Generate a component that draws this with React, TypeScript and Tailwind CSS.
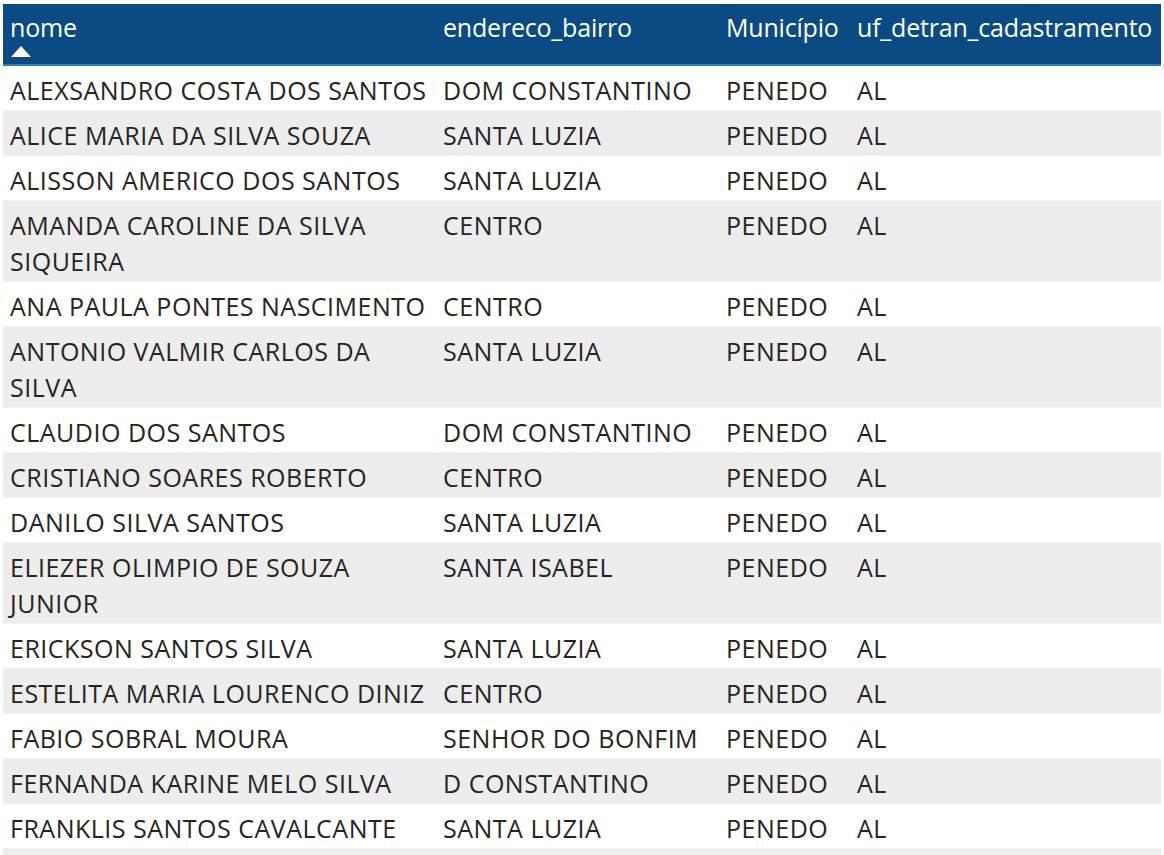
const rows: [string[], string, string, string][] = [
  [['ALEXSANDRO COSTA DOS SANTOS'], 'DOM CONSTANTINO', 'PENEDO', 'AL'],
  [['ALICE MARIA DA SILVA SOUZA'], 'SANTA LUZIA', 'PENEDO', 'AL'],
  [['ALISSON AMERICO DOS SANTOS'], 'SANTA LUZIA', 'PENEDO', 'AL'],
  [['AMANDA CAROLINE DA SILVA', 'SIQUEIRA'], 'CENTRO', 'PENEDO', 'AL'],
  [['ANA PAULA PONTES NASCIMENTO'], 'CENTRO', 'PENEDO', 'AL'],
  [['ANTONIO VALMIR CARLOS DA', 'SILVA'], 'SANTA LUZIA', 'PENEDO', 'AL'],
  [['CLAUDIO DOS SANTOS'], 'DOM CONSTANTINO', 'PENEDO', 'AL'],
  [['CRISTIANO SOARES ROBERTO'], 'CENTRO', 'PENEDO', 'AL'],
  [['DANILO SILVA SANTOS'], 'SANTA LUZIA', 'PENEDO', 'AL'],
  [['ELIEZER OLIMPIO DE SOUZA', 'JUNIOR'], 'SANTA ISABEL', 'PENEDO', 'AL'],
  [['ERICKSON SANTOS SILVA'], 'SANTA LUZIA', 'PENEDO', 'AL'],
  [['ESTELITA MARIA LOURENCO DINIZ'], 'CENTRO', 'PENEDO', 'AL'],
  [['FABIO SOBRAL MOURA'], 'SENHOR DO BONFIM', 'PENEDO', 'AL'],
  [['FERNANDA KARINE MELO SILVA'], 'D CONSTANTINO', 'PENEDO', 'AL'],
  [['FRANKLIS SANTOS CAVALCANTE'], 'SANTA LUZIA', 'PENEDO', 'AL'],
];

export default function App() {
  return (
    <div
      className="h-[855px] overflow-hidden bg-white pt-1 pl-[3px] pr-[3px]"
      style={{ fontFamily: '"Open Sans", "Noto Sans", sans-serif' }}>
      <div className="grid grid-cols-[433px_283px_131px_1fr] bg-[#0b4a82] border-b-2 border-[#2b7cc4] h-[62px] text-white text-[25px] tracking-[-0.2px]">
        <div className="pl-[7px] pt-[5px] leading-[36px] relative">
          nome
          <svg className="absolute left-[8px] top-[42px]" width="20" height="11" viewBox="0 0 20 11">
            <polygon points="10,0 20,11 0,11" fill="white" />
          </svg>
        </div>
        <div className="pl-[7px] pt-[5px] leading-[36px]">endereco_bairro</div>
        <div className="pl-[7px] pt-[5px] leading-[36px]">Município</div>
        <div className="pl-[7px] pt-[5px] leading-[36px] whitespace-nowrap">uf_detran_cadastramento</div>
      </div>
      {rows.map(([name, bairro, mun, uf], i) => (
        <div
          key={i}
          className={`grid grid-cols-[433px_283px_131px_1fr] border-b border-[#f4f3f3] text-[25px] tracking-[0.5px] text-[#252423] leading-[36px] pt-[6px] pb-[2px] ${
            i % 2 === 1 ? 'bg-[#eeedee]' : 'bg-white'
          }`}>
          <div className="pl-[7px] whitespace-nowrap">
            {name.map((l, j) => (
              <div key={j}>{l}</div>
            ))}
          </div>
          <div className="pl-[7px] whitespace-nowrap">{bairro}</div>
          <div className="pl-[7px] whitespace-nowrap">{mun}</div>
          <div className="pl-[7px] whitespace-nowrap">{uf}</div>
        </div>
      ))}
      <div className="h-[45px] bg-[#eeedee]" />
    </div>
  );
}
